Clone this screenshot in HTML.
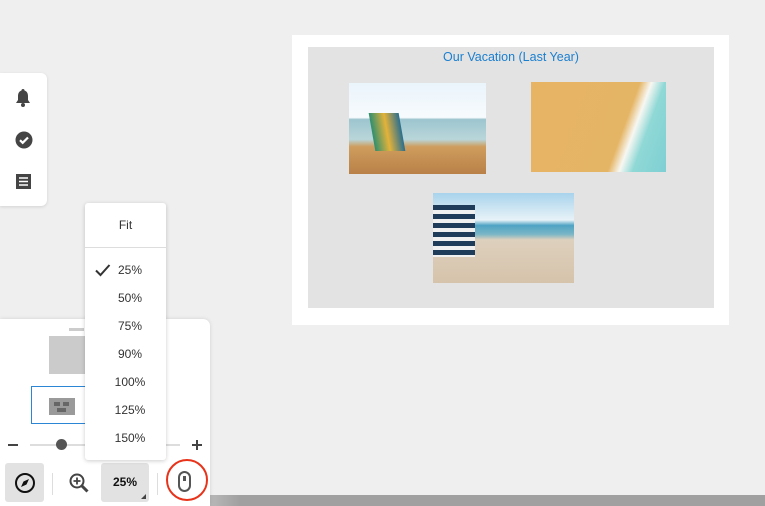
<!DOCTYPE html>
<html><head><style>
body{margin:0;width:765px;height:506px;overflow:hidden;background:#efefef;font-family:"Liberation Sans",sans-serif;position:relative}
.a{position:absolute}
</style></head><body>
<div class="a" style="left:210px;top:495px;width:555px;height:11px;background:linear-gradient(90deg,#b8b8b8,#a0a0a0 30px)"></div>
<div class="a" style="left:292px;top:35px;width:437px;height:290px;background:#fff"></div>
<div class="a" style="left:308px;top:47px;width:406px;height:261px;background:#e3e3e3"></div>
<div class="a" style="left:308px;top:50px;width:406px;text-align:center;color:#1a7fd0;font-size:12.5px">Our Vacation (Last Year)</div>
<div class="a" style="left:349px;top:83px;width:137px;height:91px;background:linear-gradient(180deg,#eaf4fb 0,#f7fbfd 38%,#9dc5cf 40%,#b9d6da 62%,#cf9d5e 70%,#b98047 100%)"></div>
<div class="a" style="left:372px;top:113px;width:30px;height:38px;background:linear-gradient(90deg,#2f8f6e,#e3b23a,#2b6f8f);transform:skewX(10deg)"></div>
<div class="a" style="left:531px;top:82px;width:135px;height:90px;background:linear-gradient(110deg,#e6b463 0,#e5b566 65%,#f7f7f2 72%,#8fd8d6 80%,#7fcfd3 100%)"></div>
<div class="a" style="left:433px;top:193px;width:141px;height:90px;background:linear-gradient(180deg,#a8d3ec 0,#e8f2f8 30%,#4ea3c4 36%,#7cb6c6 46%,#ddd0bd 52%,#d6c3ab 100%)"></div>
<div class="a" style="left:433px;top:205px;width:42px;height:52px;background:repeating-linear-gradient(180deg,#1f3d5a 0 5px,#f0f0f0 5px 9px)"></div>
<div class="a" style="left:0;top:73px;width:47px;height:133px;background:#fff;border-radius:0 6px 6px 0;box-shadow:0 1px 3px rgba(0,0,0,.12)"></div>
<svg class="a" style="left:14px;top:88px" width="18" height="20" viewBox="0 0 18 20"><path d="M9 1a1.5 1.5 0 0 1 1.5 1.5C13 3.3 14 5.5 14 8v4l2 3H2l2-3V8c0-2.5 1-4.7 3.5-5.5A1.5 1.5 0 0 1 9 1z" fill="#444"/><circle cx="9" cy="17" r="2" fill="#444"/></svg>
<svg class="a" style="left:15px;top:131px" width="18" height="18" viewBox="0 0 18 18"><circle cx="9" cy="9" r="8.5" fill="#444"/><path d="M5 9.2l2.7 2.6L13 6.5" stroke="#fff" stroke-width="2.2" fill="none"/></svg>
<svg class="a" style="left:16px;top:174px" width="15" height="15" viewBox="0 0 15 15"><rect width="15" height="15" fill="#444"/><path d="M3 4h9M3 7.5h9M3 11h9" stroke="#fff" stroke-width="1.6"/></svg>
<div class="a" style="left:0;top:319px;width:210px;height:187px;background:#fff;border-radius:0 7px 0 0;box-shadow:0 0 4px rgba(0,0,0,.12)"></div>
<div class="a" style="left:69px;top:328px;width:15px;height:3px;background:#ccc"></div>
<div class="a" style="left:49px;top:336px;width:40px;height:38px;background:#cbcbcb"></div>
<div class="a" style="left:31px;top:386px;width:60px;height:38px;border:1px solid #2b86d6;box-sizing:border-box"></div>
<div class="a" style="left:49px;top:398px;width:26px;height:17px;background:#9a9a9a"></div>
<div class="a" style="left:54px;top:402px;width:6px;height:4px;background:#666"></div><div class="a" style="left:63px;top:402px;width:6px;height:4px;background:#666"></div><div class="a" style="left:57px;top:408px;width:9px;height:4px;background:#666"></div>
<div class="a" style="left:8px;top:444px;width:10px;height:2px;background:#444"></div>
<div class="a" style="left:30px;top:444px;width:150px;height:2px;background:#ddd"></div>
<div class="a" style="left:56px;top:439px;width:11px;height:11px;border-radius:50%;background:#555"></div>
<div class="a" style="left:192px;top:444px;width:10px;height:2px;background:#444"></div><div class="a" style="left:196px;top:440px;width:2px;height:10px;background:#444"></div>
<div class="a" style="left:5px;top:463px;width:39px;height:39px;background:#e2e2e2;border-radius:3px"></div>
<svg class="a" style="left:14px;top:472px" width="22" height="22" viewBox="0 0 22 22"><circle cx="11" cy="11" r="9" stroke="#111" stroke-width="2" fill="none"/><path d="M15 7l-2.5 5.5L7 15l2.5-5.5z" fill="#111"/></svg>
<div class="a" style="left:52px;top:473px;width:1px;height:22px;background:#ddd"></div>
<svg class="a" style="left:68px;top:472px" width="22" height="22" viewBox="0 0 22 22"><circle cx="9" cy="9" r="6.5" stroke="#444" stroke-width="2" fill="none"/><path d="M9 5.5v7M5.5 9h7" stroke="#444" stroke-width="1.8"/><path d="M13.5 13.5l6 6" stroke="#444" stroke-width="3"/></svg>
<div class="a" style="left:101px;top:463px;width:48px;height:39px;background:#e2e2e2;border-radius:3px;text-align:center;line-height:39px;font-weight:bold;font-size:12px;color:#111">25%</div>
<div class="a" style="left:141px;top:494px;width:0;height:0;border-left:5px solid transparent;border-bottom:5px solid #444"></div>
<div class="a" style="left:157px;top:473px;width:1px;height:22px;background:#ddd"></div>
<div class="a" style="left:166px;top:459px;width:42px;height:42px;border:2px solid #e8331a;border-radius:50%;box-sizing:border-box"></div>
<div class="a" style="left:178px;top:471px;width:13px;height:21px;border:2px solid #555;border-radius:7px;box-sizing:border-box"></div>
<div class="a" style="left:183px;top:476px;width:3px;height:5px;background:#555"></div>
<div class="a" style="left:85px;top:203px;width:81px;height:257px;background:#fff;border-radius:3px;box-shadow:0 1px 4px rgba(0,0,0,.2);font-size:12px;color:#333">
<div style="height:44px;line-height:44px;text-align:center;border-bottom:1px solid #ddd">Fit</div>
<div style="position:absolute;top:61px;left:10px"><svg width="16" height="13" viewBox="0 0 16 13"><path d="M1 6.5l4.5 4.5 9-10" stroke="#333" stroke-width="2" fill="none"/></svg></div>
<div style="position:absolute;top:53px;left:0;width:90px;text-align:center;line-height:28px">25%<br>50%<br>75%<br>90%<br>100%<br>125%<br>150%</div>
</div>
</body></html>
